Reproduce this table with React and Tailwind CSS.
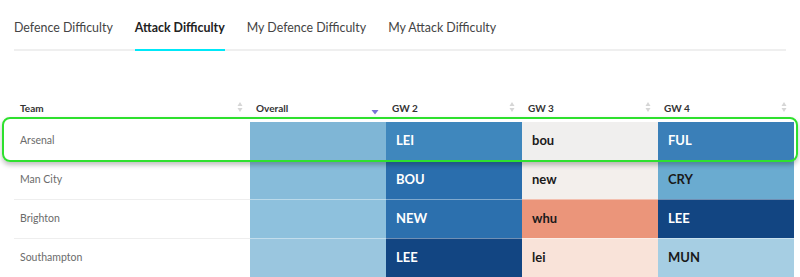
import React from 'react';

const tabs = ['Defence Difficulty', 'Attack Difficulty', 'My Defence Difficulty', 'My Attack Difficulty'];

const cols = [
  { label: 'Team', sort: 'none' },
  { label: 'Overall', sort: 'desc' },
  { label: 'GW 2', sort: 'none' },
  { label: 'GW 3', sort: 'none' },
  { label: 'GW 4', sort: 'none' },
];

const rows = [
  {
    team: 'Arsenal', overall: 'bg-[#7fb6d6]',
    gws: [
      { t: 'LEI', bg: 'bg-[#3f87bd]', fg: 'text-white' },
      { t: 'bou', bg: 'bg-[#f0efee]', fg: 'text-[#1a1a1a]' },
      { t: 'FUL', bg: 'bg-[#3a7fb8]', fg: 'text-white' },
    ],
  },
  {
    team: 'Man City', overall: 'bg-[#87bcda]',
    gws: [
      { t: 'BOU', bg: 'bg-[#2a6ead]', fg: 'text-white' },
      { t: 'new', bg: 'bg-[#f3efec]', fg: 'text-[#1a1a1a]' },
      { t: 'CRY', bg: 'bg-[#6aabd0]', fg: 'text-[#1a1a1a]' },
    ],
  },
  {
    team: 'Brighton', overall: 'bg-[#8ec1dd]',
    gws: [
      { t: 'NEW', bg: 'bg-[#2c70ae]', fg: 'text-white' },
      { t: 'whu', bg: 'bg-[#eb957a]', fg: 'text-[#1a1a1a]' },
      { t: 'LEE', bg: 'bg-[#124582]', fg: 'text-white' },
    ],
  },
  {
    team: 'Southampton', overall: 'bg-[#9ac6df]',
    gws: [
      { t: 'LEE', bg: 'bg-[#124582]', fg: 'text-white' },
      { t: 'lei', bg: 'bg-[#f9e3d9]', fg: 'text-[#1a1a1a]' },
      { t: 'MUN', bg: 'bg-[#a6cee3]', fg: 'text-[#1a1a1a]' },
    ],
  },
];

function SortIcon({ sort }) {
  if (sort === 'desc') {
    return (
      <svg width="8" height="8" viewBox="0 0 8 8" className="mt-[7px]">
        <path d="M0.5 2 L7.5 2 L4 6.5 Z" fill="#7b74d6" />
      </svg>
    );
  }
  return (
    <svg width="6" height="12" viewBox="0 0 6 12">
      <path d="M0.5 5 L5.5 5 L3 1 Z" fill="#d6d6d6" />
      <path d="M0.5 7 L5.5 7 L3 11 Z" fill="#d6d6d6" />
    </svg>
  );
}

const grid = 'grid grid-cols-[236px_136px_136px_136px_136px]';

export default function App() {
  return (
    <div className="h-[277px] w-[800px] overflow-hidden bg-white font-['Lato',sans-serif]">
      {/* Tabs */}
      <div className="mx-[14px] flex gap-[22px] border-b-2 border-[#efefef] pt-[18px]">
        {tabs.map((t, i) => (
          <div key={t} className={`-mb-[2px] border-b-2 pb-[11px] text-[12.4px] leading-[20px] ${i === 1 ? 'border-[#00e8f8] font-bold text-[#222]' : 'border-transparent text-[#444]'}`}>
            {t}
          </div>
        ))}
      </div>

      <div className="ml-[14px] mt-[48px] w-[780px]">
        {/* Header */}
        <div className={`${grid} h-[21px]`}>
          {cols.map(c => (
            <div key={c.label} className="flex items-start justify-between pl-[6px] pr-[7px] pt-[2px]">
              <span className="text-[10px] font-bold leading-[14px] text-[#333]">{c.label}</span>
              <SortIcon sort={c.sort} />
            </div>
          ))}
        </div>

        {/* Rows */}
        <div className="flex flex-col">
          {rows.map((r, i) => (
            <div key={r.team} className={`relative ${grid} ${i === 0 ? 'h-[38px] mt-[2px] z-10' : 'h-[39px]'}`}>
              {i === 0 && (
                <div className="pointer-events-none absolute -bottom-[2px] -left-[12px] -right-[4px] -top-[5px] rounded-[8px] border-2 border-[#2ee02e] shadow-[0_3px_5px_rgba(0,0,0,0.25)]" />
              )}
              <div className={`flex items-center pl-[6px] text-[10.5px] text-[#6b6b6b] ${i === 0 ? '' : 'border-t border-[#eeeeee]'}`}>
                {r.team}
              </div>
              <div className={`${r.overall} ${i === 0 ? '' : 'border-t border-white/40'}`} />
              {r.gws.map((g, j) => (
                <div key={j} className={`flex items-center pl-[10px] text-[13px] font-bold ${g.bg} ${g.fg} ${i === 0 ? '' : 'border-t border-white/40'}`}>
                  {g.t}
                </div>
              ))}
            </div>
          ))}
        </div>
      </div>
    </div>
  );
}
